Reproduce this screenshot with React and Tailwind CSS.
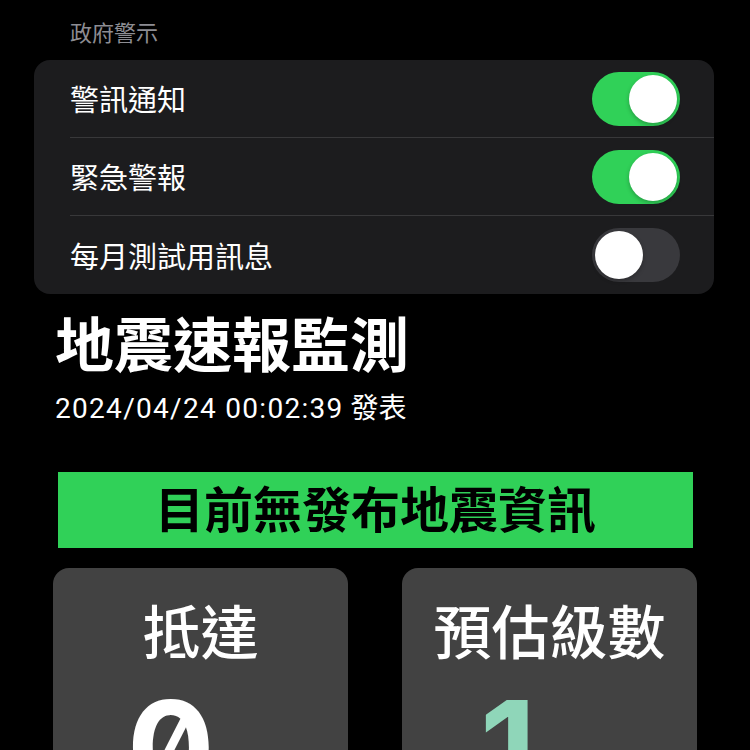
import React from "react";

const CJK = { fontFamily: '"Noto Sans CJK TC", "Noto Sans", sans-serif' };
const NUM = { fontFamily: 'Roboto, "Noto Sans CJK TC", sans-serif' };
const BIG = { fontFamily: 'Inter, Roboto, sans-serif' };

function Toggle({ on }) {
  return (
    <div
      className={
        "w-[88px] h-[54px] rounded-full flex items-center px-[3px] " +
        (on ? "bg-[#30d158] justify-end" : "bg-[#39393d] justify-start")
      }
    >
      <div className="w-[48px] h-[48px] rounded-full bg-white shadow-[0_2px_4px_rgba(0,0,0,0.25)]" />
    </div>
  );
}

function Row({ label, on, last }) {
  return (
    <div className="ml-[36px]">
      <div
        className={
          "h-[78px] flex items-center justify-between pr-[34px] " +
          (last ? "" : "border-b border-[#38383a]")
        }
      >
        <span className="text-[29px] text-white leading-none" style={CJK}>
          {label}
        </span>
        <Toggle on={on} />
      </div>
    </div>
  );
}

function StatCard({ label, value, color, pad }) {
  return (
    <div className="w-[295px] h-[260px] bg-[#424242] rounded-[16px] flex flex-col pt-[26px]">
      <div className="self-center text-[58px] leading-[70px] text-white font-medium" style={CJK}>
        {label}
      </div>
      <div className={"mt-[19px] " + pad}>
        <span
          className={"text-[130px] leading-none font-bold slashed-zero " + color}
          style={BIG}
        >
          {value}
        </span>
      </div>
    </div>
  );
}

export default function App() {
  return (
    <div className="w-[750px] h-[750px] bg-black overflow-hidden">
      <div
        className="pt-[16px] pl-[70px] text-[22px] leading-[30px] text-[#8d8d93]"
        style={CJK}
      >
        政府警示
      </div>
      <div className="mt-[14px] ml-[34px] w-[680px] bg-[#1c1c1e] rounded-[16px]">
        <Row label="警訊通知" on />
        <Row label="緊急警報" on />
        <Row label="每月測試用訊息" on={false} last />
      </div>
      <div className="pl-[55px]">
        <div
          className="mt-[13px] text-[59px] leading-[70px] font-bold text-white"
          style={CJK}
        >
          地震速報監測
        </div>
        <div className="mt-[11px] text-[28px] leading-[36px] text-white" style={NUM}>
          <span className="tracking-[1.3px]">2024/04/24 00:02:39</span>{" "}
          <span style={CJK}>發表</span>
        </div>
      </div>
      <div className="mt-[45px] ml-[58px] w-[635px] h-[76px] bg-[#30d158] flex items-center justify-center pb-[8px]">
        <span className="text-[49px] font-bold text-black leading-none" style={CJK}>
          目前無發布地震資訊
        </span>
      </div>
      <div className="mt-[20px] ml-[53px] flex gap-[54px]">
        <StatCard label="抵達" value="0" color="text-white" pad="pl-[74px]" />
        <StatCard label="預估級數" value="1" color="text-[#8fd6b9]" pad="pl-[78px]" />
      </div>
    </div>
  );
}
